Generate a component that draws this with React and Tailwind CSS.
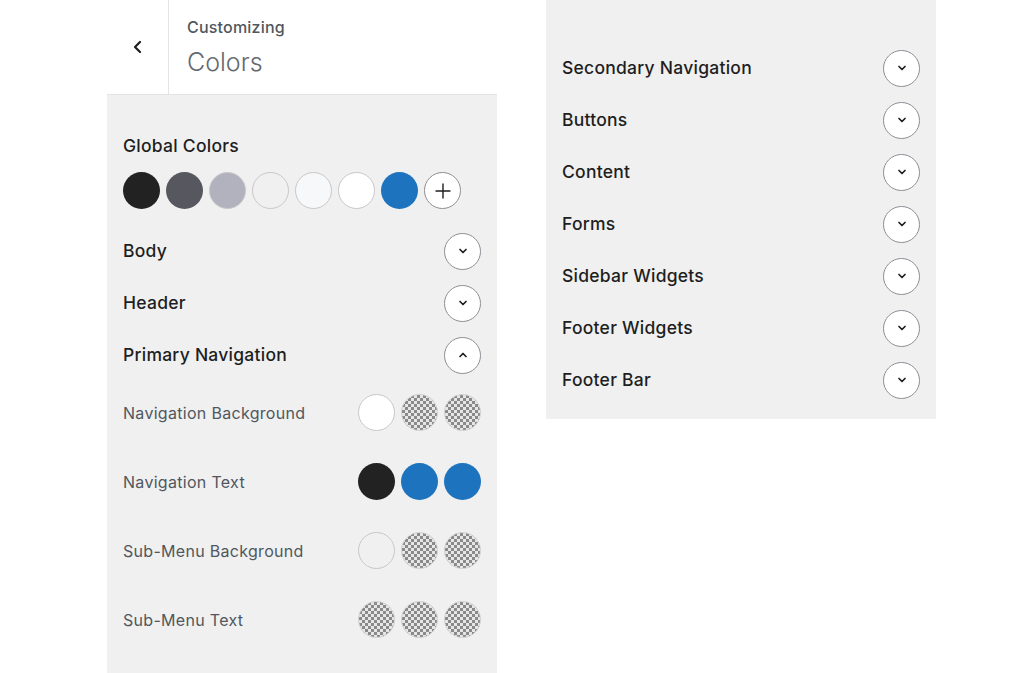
import React from "react";

const font = { fontFamily: "Inter, 'Noto Sans', 'Liberation Sans', sans-serif" };

function Chevron({ up }) {
  return (
    <svg width="12" height="12" viewBox="0 0 12 12" fill="none">
      <path
        d={up ? "M3 7.5 L6 4.5 L9 7.5" : "M3 4.5 L6 7.5 L9 4.5"}
        stroke="#1e1e1e"
        strokeWidth="1.7"
        strokeLinecap="round"
        strokeLinejoin="round"
      />
    </svg>
  );
}

function Toggle({ up }) {
  return (
    <div className="w-[37px] h-[37px] rounded-full bg-white border border-[#8c8f94] flex items-center justify-center">
      <Chevron up={up} />
    </div>
  );
}

function Swatch({ color, border, checker }) {
  if (checker) {
    return (
      <div className="w-[37px] h-[37px] rounded-full border border-[#d0d0d0] bg-[conic-gradient(#8a8a8a_25%,#e6e6e6_0_50%,#8a8a8a_0_75%,#e6e6e6_0)] bg-[length:6px_6px]" />
    );
  }
  return (
    <div
      className={`w-[37px] h-[37px] rounded-full ${border ? "border border-[#c8c8c8]" : ""}`}
      style={{ backgroundColor: color }}
    />
  );
}

function SectionRow({ label, up }) {
  return (
    <div className="h-[52px] flex items-center justify-between">
      <span className="text-[17.5px] font-medium tracking-[0.25px] text-[#1e1e1e]">{label}</span>
      <Toggle up={up} />
    </div>
  );
}

function SubRow({ label, swatches }) {
  return (
    <div className="h-[69px] flex items-center justify-between">
      <span className="text-[16px] tracking-[0.3px] text-[#50575e]">{label}</span>
      <div className="flex gap-[6px]">
        {swatches.map((s, i) => (
          <Swatch key={i} {...s} />
        ))}
      </div>
    </div>
  );
}

const CH = { checker: true };

export default function App() {
  return (
    <div className="w-[1024px] h-[673px] bg-white flex overflow-hidden" style={font}>
      <div className="ml-[107px] w-[390px] h-[673px] bg-[#f0f0f0] flex flex-col">
        <div className="h-[95px] bg-white border-b border-[#e4e4e4] flex">
          <div className="w-[62px] border-r border-[#e4e4e4] flex items-center justify-center">
            <svg width="16" height="16" viewBox="0 0 16 16" fill="none">
              <path d="M10 3 L5 8 L10 13" stroke="#1e1e1e" strokeWidth="2.2" strokeLinecap="round" strokeLinejoin="round" />
            </svg>
          </div>
          <div className="pl-[18px] pt-[16px] flex flex-col">
            <span className="text-[16px] font-medium tracking-[0.2px] text-[#50575e] leading-[22px]">Customizing</span>
            <span className="text-[25px] font-light text-[#646970] leading-[32px] mt-[8px]">Colors</span>
          </div>
        </div>
        <div className="px-[16px] pt-[39px] flex flex-col">
          <div className="text-[17.5px] font-medium tracking-[0.25px] text-[#1e1e1e] leading-[24px]">Global Colors</div>
          <div className="mt-[14px] flex gap-[6px]">
            <Swatch color="#222222" />
            <Swatch color="#575760" />
            <Swatch color="#b2b2be" border />
            <Swatch color="#f0f0f0" border />
            <Swatch color="#f7f8f9" border />
            <Swatch color="#ffffff" border />
            <Swatch color="#1e73be" />
            <div className="w-[37px] h-[37px] rounded-full bg-white border border-[#8c8f94] flex items-center justify-center">
              <svg width="18" height="18" viewBox="0 0 18 18" fill="none">
                <path d="M9 2 V16 M2 9 H16" stroke="#1e1e1e" strokeWidth="1.4" strokeLinecap="round" />
              </svg>
            </div>
          </div>
          <div className="mt-[16px] flex flex-col">
            <SectionRow label="Body" />
            <SectionRow label="Header" />
            <SectionRow label="Primary Navigation" up />
          </div>
          <div className="-mt-[3px] flex flex-col">
            <SubRow label="Navigation Background" swatches={[{ color: "#ffffff", border: true }, CH, CH]} />
            <SubRow label="Navigation Text" swatches={[{ color: "#222222" }, { color: "#1e73be" }, { color: "#1e73be" }]} />
            <SubRow label="Sub-Menu Background" swatches={[{ color: "#f0f0f0", border: true }, CH, CH]} />
            <SubRow label="Sub-Menu Text" swatches={[CH, CH, CH]} />
          </div>
        </div>
      </div>
      <div className="ml-[49px] w-[390px] h-[419px] bg-[#f0f0f0] px-[16px] pt-[42px] flex flex-col">
        <SectionRow label="Secondary Navigation" />
        <SectionRow label="Buttons" />
        <SectionRow label="Content" />
        <SectionRow label="Forms" />
        <SectionRow label="Sidebar Widgets" />
        <SectionRow label="Footer Widgets" />
        <SectionRow label="Footer Bar" />
      </div>
    </div>
  );
}
